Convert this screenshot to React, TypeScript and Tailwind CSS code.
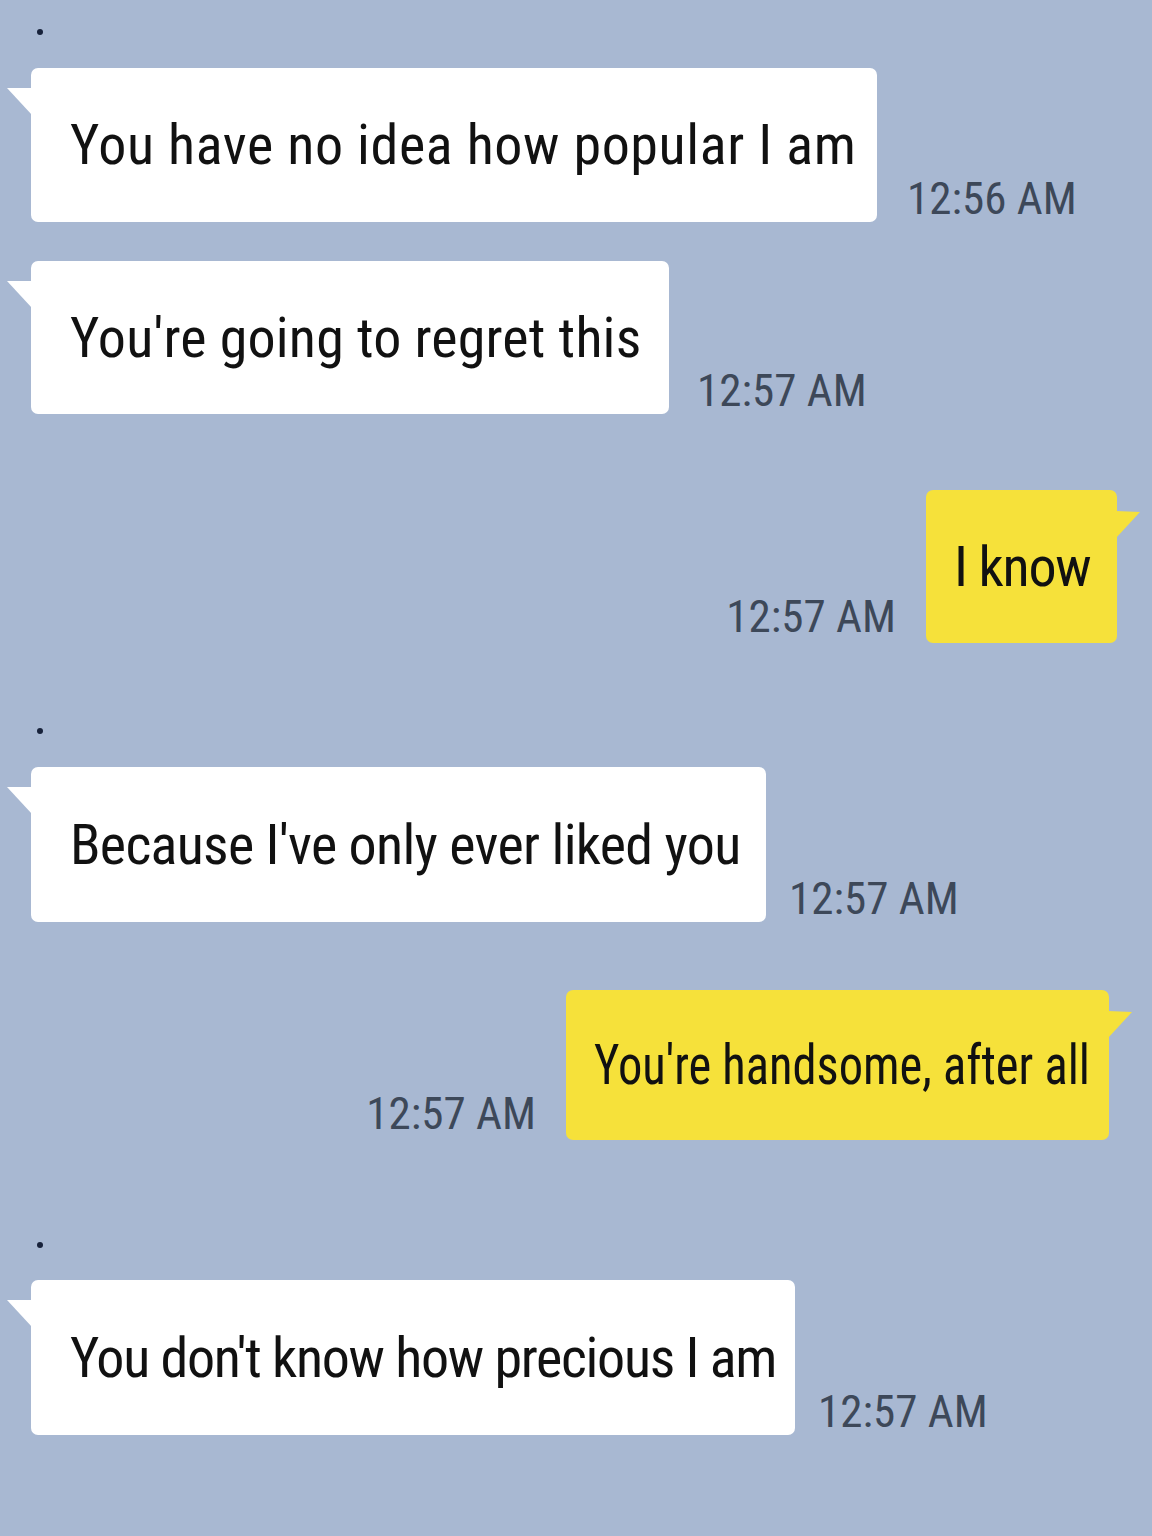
import React from "react";

const FONT = "font-['Liberation_Sans_Narrow','Roboto_Condensed','Liberation_Sans',sans-serif]";

function Dot({ mt }: { mt: string }) {
	return <div className={`${mt} ml-[37px] h-[6px] w-[6px] rounded-full bg-[#17213a]`} />;
}

function Time({ time, mb }: { time: string; mb: string }) {
	return <span className={`${mb} text-[45px] leading-none text-[#3d4859] whitespace-nowrap`}>{time}</span>;
}

type Props = { text: string; time: string; size: string; mt: string; fit: string; gap?: string };

function Received({ text, time, size, mt, fit, gap = "gap-[30px]" }: Props) {
	return (
		<div className={`${mt} ${gap} flex items-end pl-[31px]`}>
			<div className={`relative flex items-center rounded-[7px] bg-white pl-[39px] ${size}`}>
				<svg className="absolute left-[-24px] top-[20px]" width="25" height="28" viewBox="0 0 25 28">
					<polygon points="0,0 25,0 25,27" fill="#ffffff" />
				</svg>
				<span className={`origin-left text-[56px] leading-none text-[#111111] whitespace-nowrap ${fit}`}>{text}</span>
			</div>
			<Time time={time} mb="mb-[1px]" />
		</div>
	);
}

function Sent({ text, time, size, mt, mr, fit }: Props & { mr: string }) {
	return (
		<div className={`${mt} ${mr} flex items-end justify-end gap-[30px]`}>
			<Time time={time} mb="mb-[4px]" />
			<div className={`relative flex items-center rounded-[7px] bg-[#f6e13a] pl-[28px] ${size}`}>
				<svg className="absolute right-[-23px] top-[21px]" width="24" height="28" viewBox="0 0 24 28">
					<polygon points="0,0 24,1 0,27" fill="#f6e13a" />
				</svg>
				<span className={`origin-left text-[56px] leading-none text-[#111111] whitespace-nowrap ${fit}`}>{text}</span>
			</div>
		</div>
	);
}

export default function App() {
	return (
		<div className={`${FONT} flex min-h-[1536px] w-[1152px] flex-col overflow-hidden bg-[#a8b8d2]`}>
			<Dot mt="mt-[29px]" />
			<Received
				mt="mt-[33px]"
				size="h-[154px] w-[846px]"
				fit="tracking-[0.6px]"
				text="You have no idea how popular I am"
				time="12:56 AM"
			/>
			<Received
				mt="mt-[39px]"
				size="h-[153px] w-[638px]"
				fit="tracking-[0.2px]"
				gap="gap-[28px]"
				text="You're going to regret this"
				time="12:57 AM"
			/>
			<Sent
				mt="mt-[76px]"
				mr="mr-[35px]"
				size="h-[153px] w-[191px]"
				fit="tracking-[-1.2px]"
				text="I know"
				time="12:57 AM"
			/>
			<Dot mt="mt-[85px]" />
			<Received
				mt="mt-[33px]"
				size="h-[155px] w-[735px]"
				fit="tracking-[-0.7px]"
				gap="gap-[23px]"
				text="Because I've only ever liked you"
				time="12:57 AM"
			/>
			<Sent
				mt="mt-[68px]"
				mr="mr-[43px]"
				size="h-[150px] w-[543px]"
				fit="scale-x-[0.866]"
				text="You're handsome, after all"
				time="12:57 AM"
			/>
			<Dot mt="mt-[102px]" />
			<Received
				mt="mt-[32px]"
				size="h-[155px] w-[764px]"
				fit="tracking-[-1.3px]"
				gap="gap-[23px]"
				text="You don't know how precious I am"
				time="12:57 AM"
			/>
		</div>
	);
}
